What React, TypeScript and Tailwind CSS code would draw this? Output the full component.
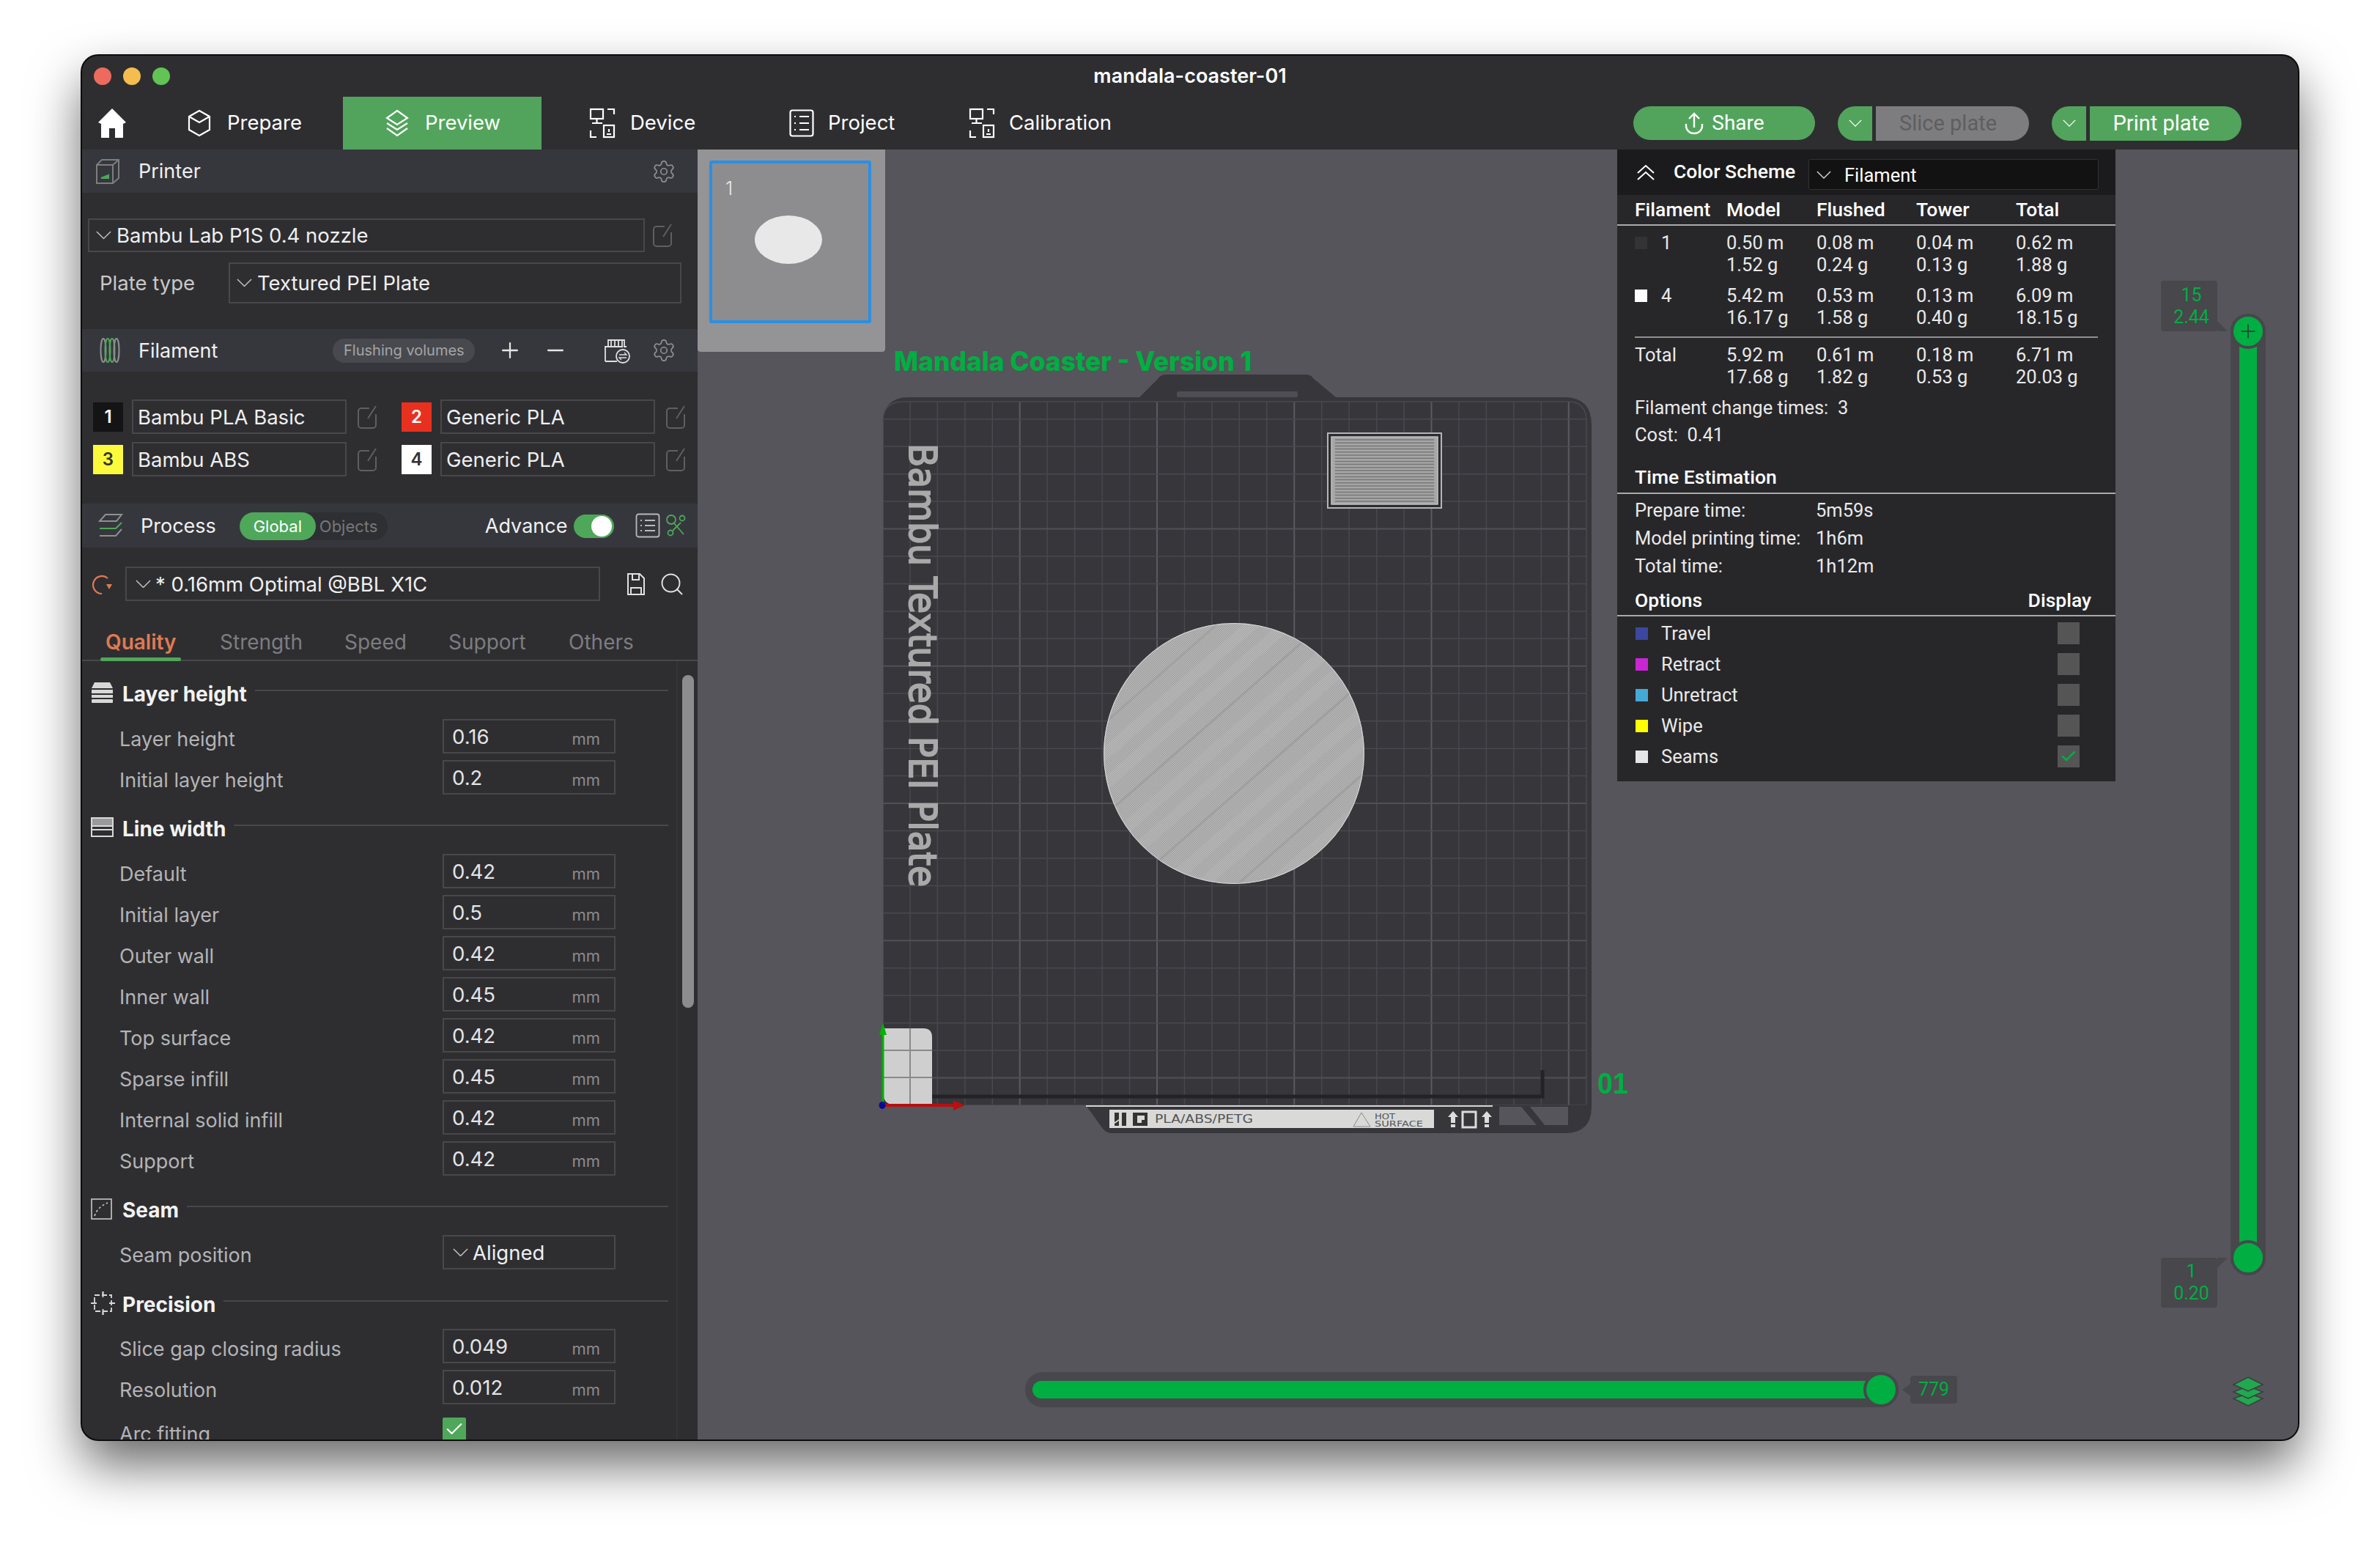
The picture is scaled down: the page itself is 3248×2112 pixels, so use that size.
import React from 'react';
import { Plus, Minus, Search, Settings, Check } from 'lucide-react';

// filas de parametros del panel izquierdo
const layerHeight = [
  { label: 'Layer height', value: '0.16' },
  { label: 'Initial layer height', value: '0.2' },
];
const lineWidth = [
  { label: 'Default', value: '0.42' },
  { label: 'Initial layer', value: '0.5' },
  { label: 'Outer wall', value: '0.42' },
  { label: 'Inner wall', value: '0.45' },
  { label: 'Top surface', value: '0.42' },
  { label: 'Sparse infill', value: '0.45' },
  { label: 'Internal solid infill', value: '0.42' },
  { label: 'Support', value: '0.42' },
];
const precision = [
  { label: 'Slice gap closing radius', value: '0.049' },
  { label: 'Resolution', value: '0.012' },
];
const filamentRows = [
  { id: '1', swatch: 'bg-[#333336]', m: ['0.50 m', '0.08 m', '0.04 m', '0.62 m'], g: ['1.52 g', '0.24 g', '0.13 g', '1.88 g'] },
  { id: '4', swatch: 'bg-white', m: ['5.42 m', '0.53 m', '0.13 m', '6.09 m'], g: ['16.17 g', '1.58 g', '0.40 g', '18.15 g'] },
];
const options = [
  { label: 'Travel', color: 'bg-[#3b47a0]', on: false },
  { label: 'Retract', color: 'bg-[#c926d3]', on: false },
  { label: 'Unretract', color: 'bg-[#45a9d6]', on: false },
  { label: 'Wipe', color: 'bg-[#ffff00]', on: false },
  { label: 'Seams', color: 'bg-[#e6e6e6]', on: true },
];

const Chevron = ({ color = '#bdbdbd', w = 21 }: { color?: string; w?: number }) => (
  <svg width={w} height={w / 2 + 1} viewBox="0 0 22 12" fill="none" stroke={color} strokeWidth="1.6" className="shrink-0">
    <path d="M1 1L11 11L21 1" />
  </svg>
);

const EditIcon = () => (
  <svg width="28" height="34" viewBox="0 0 28 34" fill="none" stroke="#5f5f63" strokeWidth="2" className="shrink-0">
    <path d="M17 5H6a4 4 0 0 0-4 4v19a4 4 0 0 0 4 4h16a4 4 0 0 0 4-4V13" />
    <path d="M26 2L15 19" />
  </svg>
);

const DeviceIcon = () => (
  <svg width="36" height="44" viewBox="0 0 36 44" fill="none" stroke="white" strokeWidth="2.2" className="shrink-0">
    <rect x="2" y="3" width="17" height="13" />
    <path d="M10.5 16v5M4 22h14M25 3h9v7M2 32v9h8" />
    <rect x="20" y="25" width="14" height="16" />
    <path d="M27 30v4M24 37h6" />
  </svg>
);

const ProjectIcon = () => (
  <svg width="34" height="38" viewBox="0 0 34 38" fill="none" stroke="white" strokeWidth="2.2" className="shrink-0">
    <rect x="1.5" y="1.5" width="31" height="35" rx="3" />
    <path d="M7 10h2M14 10h13M7 19h2M14 19h13M7 28h2M14 28h13" />
  </svg>
);

const Field = ({ label, value }: { label: string; value: string }) => (
  <div className="flex h-[47px] items-center">
    <span className="ml-[39px] w-[441px] pt-[9px] text-[27px] text-[#b4b4b6]">{label}</span>
    <div className="flex h-[47px] w-[236px] items-center justify-between border-2 border-[#48484c] pl-[11px] pr-[19px]">
      <span className="pt-[2px] text-[27.5px] text-[#e4e4e4]">{value}</span>
      <span className="pt-[8px] text-[22px] text-[#8b8b8d]">mm</span>
    </div>
  </div>
);

const SectionHead = ({ icon, title }: { icon: React.ReactNode; title: string }) => (
  <div className="flex h-[30px] items-center pr-[11px]">
    <div className="flex w-[43px] shrink-0 justify-start">{icon}</div>
    <span className="pt-[3px] text-[28px] font-bold leading-none text-[#f2f2f2]">{title}</span>
    <div className="mb-[6px] ml-[11px] h-[2px] flex-1 bg-[#48484c]" />
  </div>
);

const Select = ({ text, className }: { text: string; className: string }) => (
  <div className={`flex items-center border-2 border-[#48484c] ${className}`}>
    <div className="ml-[9px] mr-[7px] flex"><Chevron /></div>
    <span className="pt-[2px] text-[27.5px] text-[#efefef]">{text}</span>
  </div>
);

const FilamentItem = ({ num, name, swatch, numColor }: { num: string; name: string; swatch: string; numColor: string }) => (
  <div className="flex h-[47px] items-center">
    <div className={`flex h-[40px] w-[41px] shrink-0 items-center justify-center text-[24px] font-semibold ${swatch} ${numColor}`}>{num}</div>
    <div className="ml-[12px] flex h-[47px] w-[293px] items-center border-2 border-[#48484c] pl-[6px] pt-[3px] text-[27.5px] text-[#efefef]">{name}</div>
    <div className="ml-[14px]"><EditIcon /></div>
  </div>
);

const PanelHeader = ({ children, className }: { children: React.ReactNode; className: string }) => (
  <div className={`flex shrink-0 items-center bg-[#36373d] ${className}`}>{children}</div>
);

// escena del plato, en coordenadas de pagina
const PlateScene = () => {
  const vertical = Array.from({ length: 26 }, (_, n) => ({ x: 1204.5 + 37.45 * n, major: n % 5 === 0 }));
  const horizontal = Array.from({ length: 26 }, (_, n) => ({ y: 1508 - 37.45 * n, major: n % 5 === 1 }));
  const stripes = Array.from({ length: 24 }, (_, n) => n);
  return (
    <svg className="absolute inset-0" width="2184" height="1760" viewBox="952 204 2184 1760">
      <defs>
        <pattern id="dither" width="3" height="3" patternUnits="userSpaceOnUse">
          <rect width="3" height="3" fill="#bdbdbd" />
          <rect width="1.5" height="1.5" fill="#9c9c9c" />
          <rect x="1.5" y="1.5" width="1.5" height="1.5" fill="#9c9c9c" />
        </pattern>
        <clipPath id="coaster"><circle cx="1684" cy="1028" r="177" /></clipPath>
        <clipPath id="bedClip">
          <path d="M1205 575Q1205 548 1232 548H2140Q2165 548 2165 575V1508H1205Z" />
        </clipPath>
      </defs>
      <text x="1220" y="506" fontFamily="Inter" fontWeight="800" fontSize="37" fill="#00ae42" textLength="488" lengthAdjust="spacingAndGlyphs">Mandala Coaster - Version 1</text>

      <path d="M1205 578Q1205 542 1240 542H1555L1581 516Q1584 511 1592 511H1782Q1789 511 1792 516L1823 542H2135Q2172 542 2172 580V1510Q2172 1546 2135 1546H1518Q1510 1546 1505 1540L1482 1508H1205Z" fill="#36363b" />
      <rect x="1606" y="534" width="165" height="8" rx="2" fill="#4d4d53" />
      <g clipPath="url(#bedClip)">
        {vertical.map(l => (
          <line key={l.x} x1={l.x} x2={l.x} y1="548" y2="1508" stroke={l.major ? '#5a5a60' : '#48484e'} strokeWidth={l.major ? 2 : 1.5} />
        ))}
        {horizontal.map(l => (
          <line key={l.y} x1="1205" x2="2165" y1={l.y} y2={l.y} stroke={l.major ? '#505056' : '#48484e'} strokeWidth={l.major ? 2 : 1.5} />
        ))}
      </g>
      <path d="M1205 575Q1205 548 1232 548H2140Q2165 548 2165 575V1507" fill="none" stroke="#49494f" strokeWidth="1.5" />

      <text transform="translate(1241 605) rotate(90)" fontFamily="DejaVu Sans" fontWeight="400" fontSize="52" fill="#a9a9a9" stroke="#a9a9a9" strokeWidth="2" textLength="605" lengthAdjust="spacingAndGlyphs">Bambu Textured PEI Plate</text>

      <rect x="1812" y="591" width="155" height="102" fill="#2d2d31" stroke="#b5b5b5" strokeWidth="2" />
      <rect x="1817" y="596" width="145" height="92" fill="#a6a6a6" stroke="#c4c4c4" strokeWidth="1.5" />
      {Array.from({ length: 21 }, (_, n) => (
        <line key={n} x1="1822" x2="1957" y1={600 + n * 4.2} y2={600 + n * 4.2} stroke="#767676" strokeWidth="1.5" />
      ))}

      <circle cx="1684" cy="1028" r="178" fill="url(#dither)" />
      <g clipPath="url(#coaster)">
        {stripes.map(n => (
          <line key={n} x1={1150 + n * 48} y1="1300" x2={1150 + n * 48 + 570} y2="800" stroke={n % 3 === 0 ? '#8a8a8a' : '#cfcfcf'} strokeWidth={n % 3 === 0 ? 3 : 16} opacity={n % 3 === 0 ? 0.3 : 0.14} />
        ))}
      </g>
      <circle cx="1684" cy="1028" r="177.5" fill="none" stroke="#d8d8d8" strokeWidth="1" />

      <path d="M1205 1403H1260Q1272 1403 1272 1415V1507H1220Q1205 1507 1205 1490Z" fill="#cfcfcf" />
      <path d="M1242 1403V1507M1205 1433H1272M1205 1470H1272" stroke="#8a8a8a" strokeWidth="2" />
      <path d="M1272 1496H2105V1460" fill="none" stroke="#232326" strokeWidth="5" />

      <rect x="1482" y="1508" width="555" height="2" fill="#d4d4d4" />
      <rect x="1514" y="1514" width="443" height="25" fill="#d9dad8" />
      <path d="M1521 1518H1527V1527L1521 1531ZM1531 1518H1537V1536H1531ZM1521 1533L1527 1529V1536H1521Z" fill="#333" />
      <path fillRule="evenodd" d="M1546 1518H1566V1536H1546ZM1552 1522V1532H1558V1528H1562V1522Z" fill="#333" />
      <text x="1576" y="1532" fontFamily="DejaVu Sans" fontSize="15" fill="#555" textLength="134" lengthAdjust="spacingAndGlyphs">PLA/ABS/PETG</text>
      <path d="M1858 1518L1870 1537H1847Z" fill="none" stroke="#8a8a8a" strokeWidth="1" />
      <text x="1876" y="1527" fontFamily="DejaVu Sans" fontSize="10" fill="#555" textLength="28" lengthAdjust="spacingAndGlyphs">HOT</text>
      <text x="1876" y="1537" fontFamily="DejaVu Sans" fontSize="10" fill="#555" textLength="66" lengthAdjust="spacingAndGlyphs">SURFACE</text>
      <path d="M1983 1516L1990 1524H1986V1532H1980V1524H1976ZM1980 1534H1986V1538H1980ZM2029 1516L2036 1524H2032V1532H2026V1524H2022ZM2026 1534H2032V1538H2026Z" fill="#dcdcdc" />
      <rect x="1996" y="1517" width="18" height="21" fill="none" stroke="#dcdcdc" strokeWidth="3" />
      <path d="M2046 1510H2076L2097 1535H2046Z" fill="#55555b" />
      <path d="M2088 1510H2140V1535H2108Z" fill="#55555b" />

      <line x1="1205" y1="1507" x2="1205" y2="1410" stroke="#00b400" strokeWidth="3" />
      <path d="M1205 1396L1210 1412H1200Z" fill="#00b400" />
      <line x1="1205" y1="1508" x2="1305" y2="1508" stroke="#b80f0f" strokeWidth="4" />
      <path d="M1317 1508L1301 1501V1515Z" fill="#b80f0f" />
      <ellipse cx="1204" cy="1508" rx="4.5" ry="5" fill="#0a0a90" />

      <text x="2180" y="1492" fontFamily="Liberation Sans" fontWeight="700" fontSize="41" fill="#00ae42" textLength="42" lengthAdjust="spacingAndGlyphs">01</text>
    </svg>
  );
};

const Gcode = () => (
  <div className="absolute left-[1255px] top-0 flex h-[862px] w-[680px] flex-col bg-[#27272a] font-['Roboto',sans-serif] text-[25.5px] leading-[30px] text-[#e9e9e9]">
    <div className="flex h-[62px] shrink-0 items-center bg-[#1b1b1d]">
      <svg width="26" height="24" viewBox="0 0 26 24" fill="none" stroke="white" strokeWidth="2" className="ml-[26px]">
        <path d="M2 13L13 3L24 13M2 22L13 12L24 22" />
      </svg>
      <span className="ml-[25px] w-[184px] pb-[2px] text-[26.5px] font-medium text-white">Color Scheme</span>
      <div className="mt-[6px] flex h-[42px] w-[396px] items-center rounded-[3px] border border-[#333336] bg-[#121213]">
        <div className="ml-[10px] flex"><Chevron color="#cfcfcf" w={20} /></div>
        <span className="ml-[18px] pt-[2px] text-white">Filament</span>
      </div>
    </div>
    <div className="grid h-[42px] shrink-0 grid-cols-[125px_123px_136px_136px_1fr] items-center border-b-2 border-[#a9a9ab] px-[24px] text-[26.5px] font-medium text-white">
      <span>Filament</span><span>Model</span><span>Flushed</span><span>Tower</span><span>Total</span>
    </div>
    <div className="mt-[8px] flex flex-col gap-[12px] px-[24px]">
      {filamentRows.map(row => (
        <div key={row.id} className="grid h-[60px] grid-cols-[125px_123px_136px_136px_1fr]">
          <div className="flex h-[30px] items-center">
            <div className={`h-[17px] w-[17px] ${row.swatch}`} />
            <span className="ml-[19px]">{row.id}</span>
          </div>
          {row.m.map((m, i) => (
            <div key={i} className="flex flex-col"><span>{m}</span><span>{row.g[i]}</span></div>
          ))}
        </div>
      ))}
    </div>
    <div className="mx-[24px] mt-[11px] h-[2px] shrink-0 bg-[#8f8f91]" />
    <div className="mt-[8px] grid h-[60px] shrink-0 grid-cols-[125px_123px_136px_136px_1fr] px-[24px]">
      <span>Total</span>
      <div className="flex flex-col"><span>5.92 m</span><span>17.68 g</span></div>
      <div className="flex flex-col"><span>0.61 m</span><span>1.82 g</span></div>
      <div className="flex flex-col"><span>0.18 m</span><span>0.53 g</span></div>
      <div className="flex flex-col"><span>6.71 m</span><span>20.03 g</span></div>
    </div>
    <div className="mt-[12px] px-[24px]">Filament change times:&nbsp;&nbsp;3</div>
    <div className="mt-[7px] px-[24px]">Cost:&nbsp;&nbsp;0.41</div>
    <div className="mt-[28px] h-[38px] shrink-0 border-b-2 border-[#a9a9ab] px-[24px] text-[26.5px] font-medium text-white">Time Estimation</div>
    <div className="mt-[7px] flex flex-col gap-[8px] px-[24px]">
      <div className="flex"><span className="w-[247px]">Prepare time:</span><span>5m59s</span></div>
      <div className="flex"><span className="w-[247px]">Model printing time:</span><span>1h6m</span></div>
      <div className="flex"><span className="w-[247px]">Total time:</span><span>1h12m</span></div>
    </div>
    <div className="mt-[17px] flex h-[37px] shrink-0 justify-between border-b-2 border-[#a9a9ab] pl-[24px] pr-[33px] text-[26.5px] font-medium text-white">
      <span>Options</span><span>Display</span>
    </div>
    <div className="flex flex-col px-[25px] pt-[2px]">
      {options.map(o => (
        <div key={o.label} className="flex h-[42px] items-center">
          <div className={`h-[17px] w-[17px] ${o.color}`} />
          <span className="ml-[18px]">{o.label}</span>
          <div className="ml-auto mr-[24px] flex h-[30px] w-[30px] items-center justify-center bg-[#555556]">
            {o.on && <Check size={24} strokeWidth={2.5} color="#00ae42" />}
          </div>
        </div>
      ))}
    </div>
  </div>
);

const Sliders = () => (
  <>
    {/* vertical */}
    <div className="absolute left-[2092px] top-[224px] h-[1312px] w-[48px] rounded-full bg-[#47474c]" />
    <div className="absolute left-[2104px] top-[268px] h-[1224px] w-[24px] bg-[#00ae42]" />
    <div className="absolute left-[2092px] top-[224px] flex h-[48px] w-[48px] items-center justify-center rounded-full border-4 border-[#47474c] bg-[#00ae42]">
      <Plus size={30} strokeWidth={1.2} color="#30363a" />
    </div>
    <div className="absolute left-[2092px] top-[1488px] h-[48px] w-[48px] rounded-full border-4 border-[#47474c] bg-[#00ae42]" />
    <div className="absolute left-[1997px] top-[179px] flex h-[69px] w-[77px] flex-col items-center justify-center rounded-[4px] bg-[#47474c] pl-[6px] font-['Roboto',sans-serif] text-[25px] leading-[30px] text-[#00ae42]">
      <span>15</span><span>2.44</span>
      <div className="absolute -right-[14px] bottom-0 h-0 w-0 border-l-[14px] border-t-[14px] border-l-[#47474c] border-t-transparent" />
    </div>
    <div className="absolute left-[1997px] top-[1512px] flex h-[68px] w-[77px] flex-col items-center justify-center rounded-[4px] bg-[#47474c] pl-[6px] font-['Roboto',sans-serif] text-[25px] leading-[30px] text-[#00ae42]">
      <span>1</span><span>0.20</span>
      <div className="absolute -right-[14px] top-0 h-0 w-0 border-b-[14px] border-l-[14px] border-b-transparent border-l-[#47474c]" />
    </div>
    <svg className="absolute left-[2094px] top-[1673px]" width="44" height="42" viewBox="0 0 44 42">
      <path d="M22 24L42 31L22 41L2 31Z" fill="#22a84e" stroke="#3a3d42" strokeWidth="1.5" />
      <path d="M22 14L42 22L22 31L2 22Z" fill="#22a84e" stroke="#3a3d42" strokeWidth="1.5" />
      <path d="M22 2L42 12L22 21L2 12Z" fill="#22a84e" stroke="#3a3d42" strokeWidth="1.5" />
    </svg>

    {/* horizontal */}
    <div className="absolute left-[447px] top-[1668px] h-[48px] w-[1192px] rounded-full bg-[#47474c]" />
    <div className="absolute left-[457px] top-[1680px] h-[24px] w-[1140px] rounded-l-full bg-[#00ae42]" />
    <div className="absolute left-[1591px] top-[1668px] h-[48px] w-[48px] rounded-full border-4 border-[#47474c] bg-[#00ae42]" />
    <div className="absolute left-[1655px] top-[1673px] flex h-[38px] w-[64px] items-center justify-center rounded-[4px] bg-[#47474c] font-['Roboto',sans-serif] text-[25px] text-[#00ae42]">
      779
      <div className="absolute -left-[11px] top-[11px] h-0 w-0 border-b-[8px] border-r-[11px] border-t-[8px] border-b-transparent border-r-[#47474c] border-t-transparent" />
    </div>
  </>
);

export default function App() {
  return (
    <div className="h-[2112px] w-[3248px] overflow-hidden bg-white pl-[112px] pt-[76px] font-['Inter',sans-serif]">
      <div className="flex h-[1888px] w-[3024px] flex-col overflow-hidden rounded-[22px] bg-[#2e2e31] shadow-[0_0_0_2px_#0c0c0c,0_34px_70px_rgba(0,0,0,0.6)]">
        {/* barra de titulo */}
        <div className="grid h-[56px] shrink-0 grid-cols-[1fr_auto_1fr] items-center">
          <div className="flex gap-[16px] pl-[16px]">
            <div className="h-[24px] w-[24px] rounded-full bg-[#ee6a5f]" />
            <div className="h-[24px] w-[24px] rounded-full bg-[#f5bd4f]" />
            <div className="h-[24px] w-[24px] rounded-full bg-[#61c454]" />
          </div>
          <span className="text-[27px] font-semibold text-white">mandala-coaster-01</span>
          <div />
        </div>

        {/* navegacion */}
        <div className="flex h-[72px] shrink-0 items-center text-[27.5px] text-white">
          <svg width="38" height="40" viewBox="0 0 38 40" fill="white" className="ml-[22px] shrink-0">
            <path d="M19 0L38 19L34 21V40H23V27H15V40H4V21L0 19Z" />
          </svg>
          <div className="ml-[84px] flex w-[212px] items-center gap-[22px]">
            <svg width="32" height="38" viewBox="0 0 32 38" fill="none" stroke="white" strokeWidth="2.2">
              <path d="M16 2L30 10V28L16 36L2 28V10ZM2 10L16 18L30 10" />
            </svg>
            <span>Prepare</span>
          </div>
          <div className="flex h-[72px] w-[271px] items-center justify-center gap-[22px] bg-[#52a45c] pl-[2px]">
            <svg width="32" height="40" viewBox="0 0 32 40" fill="none" stroke="white" strokeWidth="2.2">
              <path d="M16 3L30 13L16 22L2 13ZM2 20L16 29L30 20M2 27L16 37L30 27" />
            </svg>
            <span>Preview</span>
          </div>
          <div className="ml-[65px] flex w-[273px] items-center gap-[20px]">
            <DeviceIcon />
            <span>Device</span>
          </div>
          <div className="flex w-[245px] items-center gap-[19px]">
            <ProjectIcon />
            <span>Project</span>
          </div>
          <div className="flex items-center gap-[19px]">
            <DeviceIcon />
            <span>Calibration</span>
          </div>

          <div className="ml-auto flex items-center pr-[77px] font-['Roboto',sans-serif] text-[29px]">
            <div className="flex h-[46px] w-[248px] items-center justify-center gap-[10px] rounded-full bg-[#52a45c] text-[28px]">
              <svg width="28" height="32" viewBox="0 0 28 32" fill="none" stroke="white" strokeWidth="2.4">
                <path d="M14 22V3M7 10L14 3L21 10M3 17V20A11 10 0 0 0 25 20V17" />
              </svg>
              <span>Share</span>
            </div>
            <div className="ml-[31px] flex h-[47px] w-[47px] items-center justify-center rounded-l-full bg-[#52a45c]">
              <Chevron color="white" w={18} />
            </div>
            <div className="ml-[5px] flex h-[47px] w-[209px] items-center justify-center rounded-r-full bg-[#7d7d7f] pr-[12px] pt-[2px] text-[#5e5e60]">Slice plate</div>
            <div className="ml-[31px] flex h-[47px] w-[47px] items-center justify-center rounded-l-full bg-[#52a45c]">
              <Chevron color="white" w={18} />
            </div>
            <div className="ml-[5px] flex h-[47px] w-[207px] items-center justify-center rounded-r-full bg-[#52a45c] pr-[12px] pt-[2px]">Print plate</div>
          </div>
        </div>

        <div className="flex min-h-0 flex-1">
          {/* panel izquierdo */}
          <div className="flex w-[840px] shrink-0 flex-col overflow-hidden">
            <PanelHeader className="h-[59px] px-[18px]">
              <svg width="34" height="36" viewBox="0 0 34 36" fill="none" stroke="#7d7d80" strokeWidth="2">
                <path d="M2 9H24V34H2ZM2 9L9 2H32V27L24 34M24 9L32 2" />
                <path d="M8 27L18 23V27Z" fill="#4fa75a" stroke="#4fa75a" />
              </svg>
              <span className="ml-[25px] pt-[2px] text-[27px] text-[#f0f0f0]">Printer</span>
              <Settings size={34} strokeWidth={1.2} color="#8f8f92" className="ml-auto mr-[11px]" />
            </PanelHeader>
            <div className="flex h-[186px] shrink-0 flex-col pl-[8px] pr-[22px] pt-[35px]">
              <div className="flex items-center">
                <Select text="Bambu Lab P1S 0.4 nozzle" className="h-[46px] w-[760px]" />
                <div className="ml-[10px]"><EditIcon /></div>
              </div>
              <div className="mt-[14px] flex items-center">
                <span className="w-[192px] pl-[16px] pt-[2px] text-[27.5px] text-[#c8c8c8]">Plate type</span>
                <Select text="Textured PEI Plate" className="h-[56px] w-[618px]" />
              </div>
            </div>

            <PanelHeader className="h-[58px] pl-[24px]">
              <svg width="28" height="36" viewBox="0 0 28 36" fill="none" strokeWidth="2">
                <ellipse cx="5" cy="18" rx="3.5" ry="16" stroke="#8f8f92" />
                <ellipse cx="11" cy="18" rx="3.5" ry="16" stroke="#4fa75a" />
                <ellipse cx="17" cy="18" rx="3.5" ry="16" stroke="#4fa75a" />
                <ellipse cx="23" cy="18" rx="3.5" ry="16" stroke="#8f8f92" />
              </svg>
              <span className="ml-[25px] pt-[2px] text-[27px] text-[#f0f0f0]">Filament</span>
              <div className="ml-[157px] flex h-[33px] w-[194px] items-center justify-center rounded-full bg-[#48494e] text-[20px] text-[#a4a4a6]">Flushing volumes</div>
              <Plus size={34} strokeWidth={1.6} color="#e6e6e6" className="ml-[31px]" />
              <Minus size={34} strokeWidth={1.6} color="#e6e6e6" className="ml-[28px]" />
              <svg width="36" height="36" viewBox="0 0 36 36" fill="none" stroke="#e0e0e0" strokeWidth="1.8" className="ml-[49px]">
                <path d="M2 33V13H6V4H28V13H31M2 33H18" />
                <path d="M10 5V13M15 5V13M20 5V13M25 5V13M2 13H26" />
                <circle cx="26" cy="26" r="9" />
                <path d="M21 24H31L28 21M31 28H21L24 31" strokeWidth="1.3" />
              </svg>
              <Settings size={34} strokeWidth={1.2} color="#8f8f92" className="ml-[29px]" />
            </PanelHeader>
            <div className="grid h-[180px] shrink-0 grid-cols-[421px_1fr] content-start gap-y-[11px] pl-[15px] pt-[38px]">
              <FilamentItem num="1" name="Bambu PLA Basic" swatch="bg-[#141414]" numColor="text-white" />
              <FilamentItem num="2" name="Generic PLA" swatch="bg-[#e8301f]" numColor="text-white" />
              <FilamentItem num="3" name="Bambu ABS" swatch="bg-[#fbfb3c]" numColor="text-[#333]" />
              <FilamentItem num="4" name="Generic PLA" swatch="bg-white" numColor="text-[#333]" />
            </div>

            <PanelHeader className="h-[60px] pl-[22px]">
              <svg width="34" height="36" viewBox="0 0 34 36" fill="none" strokeWidth="2">
                <path d="M2 12L10 3H32L25 12Z" stroke="#8f8f92" />
                <path d="M2 22H24L32 14" stroke="#4fa75a" />
                <path d="M2 32H24L32 23" stroke="#8f8f92" />
              </svg>
              <span className="ml-[24px] pt-[2px] text-[27px] text-[#f0f0f0]">Process</span>
              <div className="ml-[32px] mt-[2px] flex h-[38px] w-[202px] items-center rounded-full bg-[#2e2f33]">
                <div className="flex h-[38px] w-[104px] items-center justify-center rounded-full bg-[#4fa75a] text-[22px] text-white">Global</div>
                <span className="ml-[5px] text-[22px] text-[#777779]">Objects</span>
              </div>
              <span className="ml-[133px] pt-[2px] text-[27px] text-[#f0f0f0]">Advance</span>
              <div className="ml-[9px] mt-[2px] flex h-[32px] w-[55px] items-center justify-end rounded-full bg-[#4fa75a] pr-[3px]">
                <div className="h-[28px] w-[28px] rounded-full bg-white" />
              </div>
              <svg width="34" height="34" viewBox="0 0 34 34" fill="none" stroke="#b8b8ba" strokeWidth="1.8" className="ml-[29px]">
                <rect x="1.5" y="1.5" width="31" height="31" rx="3" />
                <path d="M7 10h2M13 10h14M7 17h2M13 17h14M7 24h2M13 24h14" />
              </svg>
              <svg width="30" height="32" viewBox="0 0 30 32" fill="none" stroke="#4fa75a" strokeWidth="1.8" className="ml-[6px]">
                <circle cx="9" cy="8" r="6" />
                <circle cx="24" cy="6" r="3.5" />
                <circle cx="8" cy="26" r="3.5" />
                <path d="M13 13L26 28M22 12L11 23" />
              </svg>
            </PanelHeader>

            <div className="flex shrink-0 items-center pl-[13px] pt-[26px]">
              <svg width="28" height="34" viewBox="0 0 28 34" fill="none" stroke="#e07a52" strokeWidth="2.2">
                <path d="M22 9A12 12 0 1 0 14 30" />
                <path d="M20 17H28L24 24Z" fill="#e07a52" stroke="none" />
              </svg>
              <div className="ml-[18px] flex h-[47px] w-[648px] items-center border-2 border-[#48484c]">
                <div className="ml-[12px] mr-[6px] flex"><Chevron /></div>
                <span className="pt-[3px] text-[27.5px] text-[#efefef]">* 0.16mm Optimal @BBL X1C</span>
              </div>
              <svg width="26" height="32" viewBox="0 0 26 32" fill="none" stroke="#e0e0e0" strokeWidth="2" className="ml-[36px]">
                <path d="M2 2H18L24 8V30H2ZM8 2V10H17V2M6 30V21H20V30" />
              </svg>
              <Search size={36} strokeWidth={1.3} color="#e0e0e0" className="ml-[18px]" />
            </div>

            {/* pestanas */}
            <div className="flex h-[82px] shrink-0 items-center border-b-2 border-[#48484c] pl-[32px] pt-[32px] text-[28px] text-[#7d7d80]">
              <span className="relative w-[156px] font-semibold text-[#e07a52]">
                Quality
                <span className="absolute -bottom-[5px] -left-[7px] h-[5px] w-[110px] rounded-sm bg-[#4fa75a]" />
              </span>
              <span className="w-[170px]">Strength</span>
              <span className="w-[142px]">Speed</span>
              <span className="w-[164px]">Support</span>
              <span>Others</span>
            </div>

            <div className="flex min-h-0 flex-1">
              <div className="min-w-0 flex-1 overflow-hidden pl-[12px] pt-[28px]">
                <SectionHead
                  title="Layer height"
                  icon={
                    <svg width="31" height="28" viewBox="0 0 31 28" fill="#d8d8d8">
                      <path d="M5 0H26L30 8H1Z" />
                      <rect x="1" y="10" width="29" height="5" />
                      <rect x="1" y="17" width="29" height="4" />
                      <rect x="1" y="23" width="29" height="5" rx="1" />
                    </svg>
                  }
                />
                <div className="mt-[21px] flex flex-col gap-[9px]">
                  {layerHeight.map(f => <Field key={f.label} {...f} />)}
                </div>

                <div className="mt-[30px]">
                  <SectionHead
                    title="Line width"
                    icon={
                      <svg width="31" height="28" viewBox="0 0 31 28" fill="none" stroke="#d8d8d8" strokeWidth="2">
                        <rect x="1" y="1" width="29" height="11" fill="#9a9a9c" />
                        <path d="M1 17H30M1 26H30M1 12V27M30 12V27" />
                      </svg>
                    }
                  />
                </div>
                <div className="mt-[21px] flex flex-col gap-[9px]">
                  {lineWidth.map(f => <Field key={f.label} {...f} />)}
                </div>

                <div className="mt-[30px]">
                  <SectionHead
                    title="Seam"
                    icon={
                      <svg width="29" height="29" viewBox="0 0 29 29" fill="none" stroke="#c8c8c8" strokeWidth="1.6">
                        <rect x="1" y="1" width="27" height="27" />
                        <path d="M5 24C8 15 14 10 23 6" strokeDasharray="3 3" />
                      </svg>
                    }
                  />
                </div>
                <div className="mt-[21px] flex h-[47px] items-center">
                  <span className="ml-[39px] w-[441px] pt-[9px] text-[27px] text-[#b4b4b6]">Seam position</span>
                  <div className="flex h-[47px] w-[236px] items-center border-2 border-[#48484c]">
                    <div className="ml-[12px] mr-[6px] flex"><Chevron /></div>
                    <span className="pt-[2px] text-[27.5px] text-[#efefef]">Aligned</span>
                  </div>
                </div>

                <div className="mt-[31px]">
                  <SectionHead
                    title="Precision"
                    icon={
                      <svg width="33" height="32" viewBox="0 0 33 32" fill="none" stroke="#d8d8d8" strokeWidth="1.8">
                        <path d="M16.5 0V32M0 16H33" />
                        <rect x="5" y="5" width="23" height="22" fill="#2e2e31" strokeDasharray="7 3" />
                        <path d="M16.5 0V8M16.5 24V32M0 16H8M25 16H33" />
                      </svg>
                    }
                  />
                </div>
                <div className="mt-[20px] flex flex-col gap-[9px]">
                  {precision.map(f => <Field key={f.label} {...f} />)}
                </div>
                <div className="mt-[18px] flex h-[32px] items-start">
                  <span className="ml-[39px] w-[441px] pt-[3px] text-[27px] text-[#b4b4b6]">Arc fitting</span>
                  <div className="flex h-[32px] w-[32px] items-center justify-center rounded-[2px] bg-[#4fa75a]">
                    <Check size={28} strokeWidth={1.8} color="white" />
                  </div>
                </div>
              </div>

              <div className="w-[29px] shrink-0 border-l-2 border-[#353539] pl-[6px] pt-[19px]">
                <div className="h-[454px] w-[16px] rounded-full bg-[#8c8c8f]" />
              </div>
            </div>
          </div>

          {/* vista 3D */}
          <div className="relative min-w-0 flex-1 bg-[#55555b]">
            <PlateScene />
            <div className="absolute left-0 top-0 h-[276px] w-[256px] rounded-b-[4px] bg-[#949496]">
              <div className="relative ml-[16px] mt-[15px] h-[222px] w-[221px] rounded-[3px] border-[4px] border-[#2a8fe4] bg-[#8d8d8f]">
                <span className="absolute left-[18px] top-[14px] text-[26px] font-light text-[#e8e8e8]">1</span>
                <div className="absolute left-[58px] top-[71px] h-[66px] w-[92px] rounded-[50%] bg-[#e8e8e8]" />
              </div>
            </div>
            <Gcode />
            <Sliders />
          </div>
        </div>
      </div>
    </div>
  );
}
